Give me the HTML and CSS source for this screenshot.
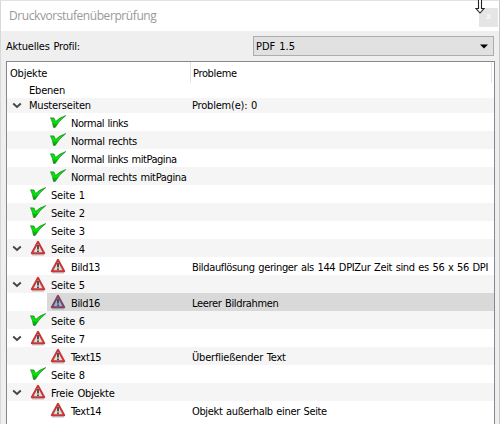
FILE: index.html
```html
<!DOCTYPE html>
<html lang="de">
<head>
<meta charset="utf-8">
<title>Druckvorstufenüberprüfung</title>
<link rel="stylesheet" href="styles.css">
</head>
<body>
<svg class="defs" aria-hidden="true">
  <defs>
    <linearGradient id="green" x1="0" y1="0" x2="0" y2="1"><stop offset="0" stop-color="#18c818"/><stop offset=".55" stop-color="#00ee00"/><stop offset="1" stop-color="#078a07"/></linearGradient>
    <symbol id="ok" viewBox="0 0 16 14"><path d="M.5 2.8 4 3 5.6 6.5Q9.5 2.5 15.8.6 9.5 5.3 5.2 12.4H3.5Q2.7 7 .5 2.8Z" fill="url(#green)" stroke="#167d20" stroke-width=".65"/></symbol>
    <symbol id="warn" viewBox="0 0 16 16"><path d="M2 14.8H14" stroke="#888" stroke-width="1.5" opacity=".45"/><path class="tri" d="M8 1.8 14.2 13.3H1.8Z" stroke-width="2" stroke-linejoin="round"/><path class="mark" d="M7.1 5h1.8v4.6H7.1Zm0 5.4h1.8v1.6H7.1Z"/></symbol>
    <symbol id="open" viewBox="0 0 10 7"><path d="M1.2 1.5 5 4.9 8.8 1.5" fill="none" stroke="#444" stroke-width="1.9"/></symbol>
  </defs>
</svg>
<div class="window">
  <header class="titlebar"><span class="title">Druckvorstufenüberprüfung</span><span class="close">x</span>
    <svg class="cursor" viewBox="0 0 10 15"><path d="M3.5-1V8.5H1L5 13 9 8.5H6.5V-1" fill="#fff" stroke="#222" stroke-width="1.1"/></svg>
  </header>
  <div class="profile"><span class="label wide">Aktuelles Profil:</span>
    <div class="select"><span class="t">PDF 1.5</span><svg class="arrow" viewBox="0 0 8 5"><path d="M0 .5H8L4 4.5Z"/></svg></div>
  </div>
  <main class="tree">
    <div class="row head"><div class="obj"><span class="t wide">Objekte</span></div><div class="prob"><span class="t">Probleme</span></div></div>
    <div class="row short"><div class="obj"><i class="tw"></i><span class="t wide">Ebenen</span></div></div>
    <div class="row short alt"><div class="obj"><i class="tw"><svg class="chev"><use href="#open"/></svg></i><span class="t wide">Musterseiten</span></div><div class="prob"><span class="t wide">Problem(e): 0</span></div></div>
    <div class="row child"><div class="obj"><svg class="ok"><use href="#ok"/></svg><span class="t tight">Normal links</span></div></div>
    <div class="row child alt"><div class="obj"><svg class="ok"><use href="#ok"/></svg><span class="t">Normal rechts</span></div></div>
    <div class="row child"><div class="obj"><svg class="ok"><use href="#ok"/></svg><span class="t tight">Normal links mitPagina</span></div></div>
    <div class="row child alt"><div class="obj"><svg class="ok"><use href="#ok"/></svg><span class="t">Normal rechts mitPagina</span></div></div>
    <div class="row"><div class="obj"><i class="tw"></i><svg class="ok"><use href="#ok"/></svg><span class="t wide">Seite 1</span></div></div>
    <div class="row alt"><div class="obj"><i class="tw"></i><svg class="ok"><use href="#ok"/></svg><span class="t wide">Seite 2</span></div></div>
    <div class="row"><div class="obj"><i class="tw"></i><svg class="ok"><use href="#ok"/></svg><span class="t wide">Seite 3</span></div></div>
    <div class="row alt"><div class="obj"><i class="tw"><svg class="chev"><use href="#open"/></svg></i><svg class="warn"><use href="#warn"/></svg><span class="t wide">Seite 4</span></div></div>
    <div class="row child"><div class="obj"><svg class="warn"><use href="#warn"/></svg><span class="t">Bild13</span></div><div class="prob"><span class="t">Bildauflösung geringer als 144 DPIZur Zeit sind es 56 x 56 DPI</span></div></div>
    <div class="row alt"><div class="obj"><i class="tw"><svg class="chev"><use href="#open"/></svg></i><svg class="warn"><use href="#warn"/></svg><span class="t wide">Seite 5</span></div></div>
    <div class="row child selected"><div class="obj"><svg class="warn"><use href="#warn"/></svg><span class="t">Bild16</span></div><div class="prob"><span class="t">Leerer Bildrahmen</span></div></div>
    <div class="row alt"><div class="obj"><i class="tw"></i><svg class="ok"><use href="#ok"/></svg><span class="t wide">Seite 6</span></div></div>
    <div class="row"><div class="obj"><i class="tw"><svg class="chev"><use href="#open"/></svg></i><svg class="warn"><use href="#warn"/></svg><span class="t wide">Seite 7</span></div></div>
    <div class="row child alt"><div class="obj"><svg class="warn"><use href="#warn"/></svg><span class="t">Text15</span></div><div class="prob"><span class="t wide">Überfließender Text</span></div></div>
    <div class="row"><div class="obj"><i class="tw"></i><svg class="ok"><use href="#ok"/></svg><span class="t wide">Seite 8</span></div></div>
    <div class="row alt"><div class="obj"><i class="tw"><svg class="chev"><use href="#open"/></svg></i><svg class="warn"><use href="#warn"/></svg><span class="t wide">Freie Objekte</span></div></div>
    <div class="row child"><div class="obj"><svg class="warn"><use href="#warn"/></svg><span class="t">Text14</span></div><div class="prob"><span class="t">Objekt außerhalb einer Seite</span></div></div>
  </main>
</div>
</body>
</html>
```
FILE: styles.css
```css
* { box-sizing: border-box; }
body {
  margin: 0;
  height: 424px;
  overflow: hidden;
  color: #000;
  background: #efefef;
  font: 11px/15px "DejaVu Sans Condensed", "DejaVu Sans", sans-serif;
  font-stretch: condensed;
  letter-spacing: -.35px;
  word-spacing: .8px;
  white-space: nowrap;
}
svg { display: block; flex: none; }
.defs { position: absolute; width: 0; height: 0; }
.window {
  height: 424px;
  border: solid #c8c8c8;
  border-width: 1px 1px 0;
  border-top-color: #e2e2e2;
  border-left-color: #d8d8d8;
}
.titlebar {
  position: relative;
  display: flex;
  justify-content: space-between;
  height: 30px;
  padding-left: 8px;
  background: #fff;
  color: #999;
  font: 12px/30px "Open Sans", "Noto Sans", sans-serif;
  letter-spacing: -.42px;
}
.close {
  width: 19px;
  height: 19px;
  margin: 7px 1px 0 0;
  background: #e5e5e5;
  color: #f5f5f5;
  font: bold 9px/17px "DejaVu Sans", sans-serif;
  text-align: center;
}
.cursor { position: absolute; left: 474px; top: -1px; width: 10px; height: 15px; }
.profile {
  display: flex;
  align-items: center;
  justify-content: space-between;
  height: 30px;
  padding: 0 5px;
}
.select {
  display: flex;
  align-items: center;
  justify-content: space-between;
  width: 241px;
  height: 20px;
  padding: 0 5px 0 2px;
  border: 1px solid #adadad;
  background: #e1e1e1;
  letter-spacing: 0;
}
.arrow { width: 8px; height: 5px; }
.tree {
  width: 489px;
  height: 363px;
  margin-left: 5px;
  border: solid #828790;
  border-width: 1px 1px 0;
  background: #fff;
}
.row { display: grid; grid-template-columns: 183px 1fr; height: 18px; }
.row > div { display: flex; align-items: center; }
.row .t { padding-top: 2px; }
.row.short .t { padding-top: 0; }
.wide { letter-spacing: -.2px; }
.tight { letter-spacing: -.45px; }
.obj { padding-left: 3px; }
.prob { padding-left: 2px; }
.head { height: 21px; }
.head .prob { padding-left: 2px; margin-right: 2px; border: solid #e3e3e3; border-width: 0 1px; }
.short { height: 15px; }
.alt { background: #f5f5f5; }
.tw { flex: none; width: 20px; padding-left: 2px; }
.short .tw { width: 19px; }
.chev { width: 10px; height: 7px; }
.child .obj { padding-left: 43px; }
.selected { background: linear-gradient(90deg, #fff 40px, #d9d9d9 40px); }
.ok, .warn { width: 16px; margin-right: 5px; }
.ok { height: 14px; }
.warn { height: 16px; fill: #ddd; stroke: #c93636; }
.mark { fill: #444; stroke: none; }
.selected .warn { fill: #91b0d8; stroke: #81445f; }
```
